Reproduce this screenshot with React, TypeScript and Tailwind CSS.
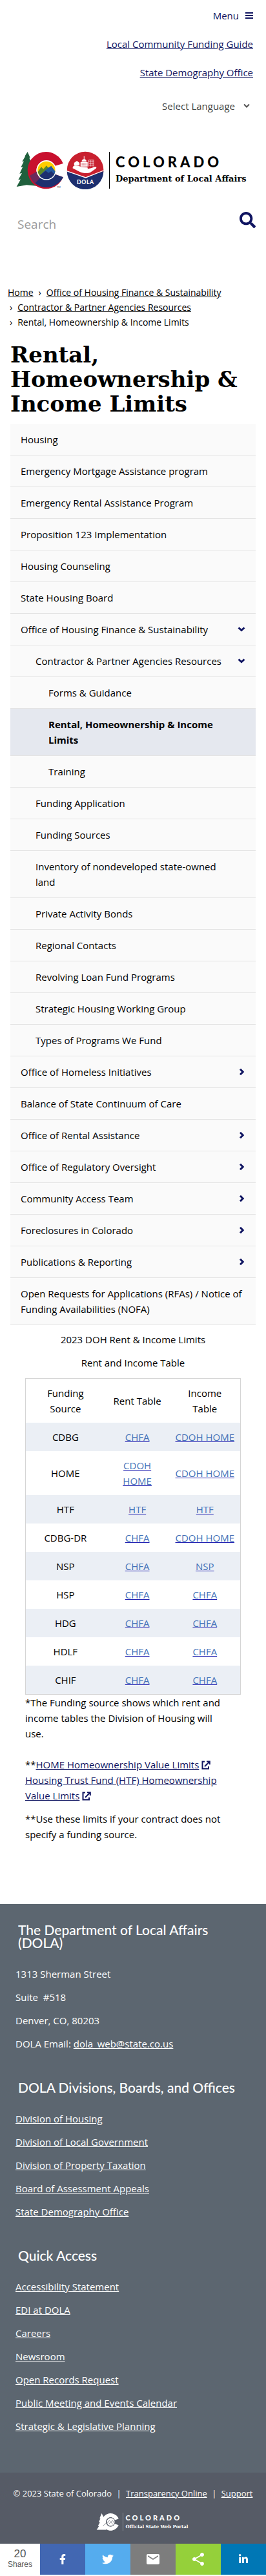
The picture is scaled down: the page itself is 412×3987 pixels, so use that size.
import React from "react";
import { FaSearch, FaFacebookF, FaTwitter, FaLinkedinIn } from "react-icons/fa";
import { MdEmail, MdShare } from "react-icons/md";

type NavItem = { label: string; level: 0 | 1 | 2; arrow?: "down" | "right"; current?: boolean };

const navItems: NavItem[] = [
  { label: "Housing", level: 0 },
  { label: "Emergency Mortgage Assistance program", level: 0 },
  { label: "Emergency Rental Assistance Program", level: 0 },
  { label: "Proposition 123 Implementation", level: 0 },
  { label: "Housing Counseling", level: 0 },
  { label: "State Housing Board", level: 0 },
  { label: "Office of Housing Finance & Sustainability", level: 0, arrow: "down" },
  { label: "Contractor & Partner Agencies Resources", level: 1, arrow: "down" },
  { label: "Forms & Guidance", level: 2 },
  { label: "Rental, Homeownership & Income Limits", level: 2, current: true },
  { label: "Training", level: 2 },
  { label: "Funding Application", level: 1 },
  { label: "Funding Sources", level: 1 },
  { label: "Inventory of nondeveloped state-owned land", level: 1 },
  { label: "Private Activity Bonds", level: 1 },
  { label: "Regional Contacts", level: 1 },
  { label: "Revolving Loan Fund Programs", level: 1 },
  { label: "Strategic Housing Working Group", level: 1 },
  { label: "Types of Programs We Fund", level: 1 },
  { label: "Office of Homeless Initiatives", level: 0, arrow: "right" },
  { label: "Balance of State Continuum of Care", level: 0 },
  { label: "Office of Rental Assistance", level: 0, arrow: "right" },
  { label: "Office of Regulatory Oversight", level: 0, arrow: "right" },
  { label: "Community Access Team", level: 0, arrow: "right" },
  { label: "Foreclosures in Colorado", level: 0, arrow: "right" },
  { label: "Publications & Reporting", level: 0, arrow: "right" },
  { label: "Open Requests for Applications (RFAs) / Notice of Funding Availabilities (NOFA)", level: 0 },
];

const levelPadding = {
  0: "pl-4 pr-3",
  1: "pl-[39px] pr-12",
  2: "pl-[59px] pr-12",
};

const tableRows = [
  ["CDBG", "CHFA", "CDOH HOME"],
  ["HOME", "CDOH HOME", "CDOH HOME"],
  ["HTF", "HTF", "HTF"],
  ["CDBG-DR", "CHFA", "CDOH HOME"],
  ["NSP", "CHFA", "NSP"],
  ["HSP", "CHFA", "CHFA"],
  ["HDG", "CHFA", "CHFA"],
  ["HDLF", "CHFA", "CHFA"],
  ["CHIF", "CHFA", "CHFA"],
];

const divisions = [
  "Division of Housing",
  "Division of Local Government",
  "Division of Property Taxation",
  "Board of Assessment Appeals",
  "State Demography Office",
];

const quickLinks = [
  "Accessibility Statement",
  "EDI at DOLA",
  "Careers",
  "Newsroom",
  "Open Records Request",
  "Public Meeting and Events Calendar",
  "Strategic & Legislative Planning",
];

function Emblems() {
  return (
    <svg viewBox="40 40 415 180" className="h-[60px] w-[138px] shrink-0" role="img" aria-label="Colorado and DOLA emblems">
      <path d="M96 46 L108 72 L104 74 L118 100 L112 102 L124 126 L136 150 L146 205 L92 200 L45 208 L64 174 L53 176 L70 145 L59 147 L74 116 L65 118 L79 90 L71 91 L86 66 L82 68 Z" fill="#20603d" />
      <path d="M262 100 A86 86 0 1 0 262 164 L224 150 A45 45 0 1 1 222 112 Z" fill="#c8102e" />
      <path d="M124 186 L150 160 A45 45 0 0 0 224 150 L262 164 A86 86 0 0 1 124 186 Z" fill="#1d2f6f" />
      <path d="M107 156 L142 136 A45 45 0 0 0 156 166 L130 193 A86 86 0 0 1 107 156 Z" fill="#6b2a5b" />
      <circle cx="184" cy="131" r="46" fill="#fff" />
      <circle cx="184" cy="131" r="41" fill="#ffcd00" />
      <path d="M144 140 L160 116 L170 126 L184 110 L196 124 L206 112 L224 138 A41 41 0 0 1 144 140 Z" fill="#5c8727" />
      <path d="M152 157 L178 132 L192 120 L206 112 L225 136 A41 41 0 0 1 152 157 Z" fill="#235a9f" />
      <path d="M152 157 L180 134 L194 144 L206 136 L221 149 A41 41 0 0 1 152 157 Z" fill="#1d2f6f" />
      <text x="233" y="215" fontSize="11" fontFamily="Lato, sans-serif" fill="#333">TM</text>
      <circle cx="365" cy="130" r="85" fill="#c8202f" />
      <path d="M280 136 L367 166 L450 136 A85 85 0 0 1 280 136 Z" fill="#1d2f6f" />
      <path d="M280 136 L367 166 L450 133" fill="none" stroke="#fff" strokeWidth="4" />
      <path d="M308 114 C320 106 334 112 346 116 L372 118 C380 119 378 125 371 126 L392 122 L409 116 C418 115 419 120 413 125 L388 142 C374 148 352 144 338 138 L306 122 Z" fill="#fff" />
      <path d="M313 97 L326 88 L338 97 V110 H313 Z M343 94 H376 V114 H343 Z M348 92 C348 76 371 76 371 92 Z M358 66 H361 V80 H358 Z" fill="#fff" />
      <path d="M350 98 V110 M356 98 V110 M362 98 V110 M368 98 V110" stroke="#c8202f" strokeWidth="2" />
      <path d="M381 84 H404 V114 M381 84 V114 M389 84 V114 M397 84 V114 M381 92 H404 M381 100 H404 M381 108 H404" stroke="#fff" strokeWidth="2" fill="none" />
      <text x="366" y="197" textAnchor="middle" fontSize="26" fontWeight="900" fontFamily="Lato, sans-serif" letterSpacing="2" fill="#fff">DOLA</text>
    </svg>
  );
}

function PortalMark() {
  return (
    <svg viewBox="0 0 110 84" className="h-7 w-[36px] shrink-0" role="img" aria-label="Colorado">
      <path d="M26 2 L38 26 L44 50 L46 80 L2 80 L14 62 L8 62 L18 44 L12 44 L20 26 L16 26 Z" fill="#fff" />
      <path d="M106 28 A41 41 0 1 0 106 58 L88 52 A22 22 0 1 1 88 34 Z" fill="#fff" />
      <circle cx="69" cy="43" r="20" fill="#fff" stroke="#565b66" strokeWidth="3" />
      <path d="M32 62 L50 46 M52 50 L62 36 L70 44 L77 36 L87 50 M60 52 L70 44 L80 56" fill="none" stroke="#565b66" strokeWidth="2" />
    </svg>
  );
}

function Chevron({ direction }: { direction: "down" | "right" }) {
  return (
    <svg viewBox="0 0 12 12" className="size-3" fill="none" stroke="#0f1461" strokeWidth="3" aria-hidden="true">
      <path d={direction === "down" ? "M1.5 3.5 L6 7.5 L10.5 3.5" : "M4 1.8 L8.2 6 L4 10.2"} />
    </svg>
  );
}

function ExternalIcon() {
  return (
    <svg viewBox="0 0 14 14" className="ml-1 inline size-[14px] align-[-2px]" fill="none" stroke="#0f1461" strokeWidth="2" aria-hidden="true">
      <path d="M5 1.5 H1.5 V12.5 H11 V9" />
      <path d="M5 9 L12.5 1.5 M8 1.2 H12.8 V6" />
    </svg>
  );
}

function FooterHeading({ children }: { children: React.ReactNode }) {
  return <h2 className="mb-[26px] pr-6 pl-1 font-['Lato',sans-serif] text-[21px] leading-5 font-medium">{children}</h2>;
}

function FooterLinks({ items }: { items: string[] }) {
  return (
    <ul className="flex flex-col gap-3">
      {items.map((item) => (
        <li key={item}>
          <a href="#" className="underline">{item}</a>
        </li>
      ))}
    </ul>
  );
}

export default function App() {
  return (
    <div className="min-h-screen bg-white font-['Open_Sans','Noto_Sans',sans-serif] text-[15px] leading-6 text-black">
      <header className="px-5 pt-3">
        <div className="flex flex-col items-end gap-5 text-[#0f1461]">
          <button type="button" className="flex items-center gap-[10px]">
            Menu
            <svg viewBox="0 0 12 12" className="size-3" fill="#0f1461" aria-hidden="true">
              <path d="M0 1h12v2H0zM0 5h12v2H0zM0 9h12v2H0z" />
            </svg>
          </button>
          <a href="#" className="underline">Local Community Funding Guide</a>
          <a href="#" className="underline">State Demography Office</a>
        </div>
        <div className="mt-7 flex items-center justify-end gap-3 pr-1 text-[#444]">
          <select aria-label="Select Language" className="appearance-none bg-transparent text-right">
            <option>Select Language</option>
          </select>
          <svg viewBox="0 0 12 8" className="h-2 w-3" fill="none" stroke="#555" strokeWidth="2" aria-hidden="true">
            <path d="M2 1.5 L6 5.5 L10 1.5" />
          </svg>
        </div>
        <a href="#" className="mt-[57px] flex items-center pl-1 text-black">
          <Emblems />
          <span className="ml-[7px] flex h-[57px] flex-col justify-center gap-1 border-l border-black pl-[9px]">
            <span className="font-['Lato',sans-serif] text-[22px] leading-6 font-black tracking-[5px]">COLORADO</span>
            <span className="font-['DejaVu_Serif',serif] text-[13px] leading-5 font-bold whitespace-nowrap">Department of Local Affairs</span>
          </span>
        </a>
        <form className="mt-8 flex items-start justify-between">
          <input type="search" aria-label="Search" placeholder="Search" className="h-11 min-w-0 flex-1 pl-[7px] text-[19px] placeholder:text-[#999]" />
          <button type="submit" aria-label="Submit search" className="-mr-1 pt-[3px]">
            <FaSearch className="size-[25px] text-[#0f1461]" />
          </button>
        </form>
      </header>

      <main className="pt-[72px]">
        <nav aria-label="Breadcrumb" className="px-3 text-[14px] leading-[23px]">
          <ol className="flex flex-wrap">
            <li><a href="#" className="underline">Home</a></li>
            <li><span className="px-2">›</span><a href="#" className="underline">Office of Housing Finance &amp; Sustainability</a></li>
            <li className="w-full"><span className="pr-2 pl-[3px]">›</span><a href="#" className="underline">Contractor &amp; Partner Agencies Resources</a></li>
            <li className="w-full"><span className="pr-2 pl-[3px]">›</span>Rental, Homeownership &amp; Income Limits</li>
          </ol>
        </nav>
        <h1 className="mt-5 px-4 font-['DejaVu_Serif',serif] text-[34px] leading-[38px] font-bold">Rental, Homeownership &amp; Income Limits</h1>

        <nav aria-label="Section" className="mx-4 mt-3 bg-[#fafafa]">
          <ul>
            {navItems.map((item) => (
              <li key={item.label} className={item.current ? "border-b border-[#e4e4e4] bg-[#e5e8ef] font-bold" : "border-b border-[#e4e4e4]"}>
                <div className="relative">
                  <a href="#" className={`block py-3 ${levelPadding[item.level]}`}>{item.label}</a>
                  {item.arrow && (
                    <button type="button" aria-label={`Toggle ${item.label}`} className="absolute inset-y-0 right-0 flex w-11 items-center justify-center">
                      <Chevron direction={item.arrow} />
                    </button>
                  )}
                </div>
              </li>
            ))}
          </ul>
        </nav>

        <div className="mt-[10px] flex flex-col gap-3 text-center">
          <p>2023 DOH Rent &amp; Income Limits</p>
          <p>Rent and Income Table</p>
        </div>

        <section className="mx-[39px] mt-3">
          <table className="w-full table-fixed border border-[#d5d5d5] text-center">
            <colgroup>
              <col className="w-[37%]" />
              <col className="w-[30%]" />
              <col className="w-[33%]" />
            </colgroup>
            <thead>
              <tr>
                <th scope="col" className="px-6 py-[10px] font-normal">Funding Source</th>
                <th scope="col" className="py-[10px] font-normal">Rent Table</th>
                <th scope="col" className="px-6 py-[10px] font-normal">Income Table</th>
              </tr>
            </thead>
            <tbody>
              {tableRows.map(([name, rent, income]) => (
                <tr key={name} className="odd:bg-[#ebeff5]">
                  <td className="py-[10px]">{name}</td>
                  <td className="px-6 py-[10px]"><a href="#" className="text-[#4472b8] underline decoration-[#1d1db0]">{rent}</a></td>
                  <td className="py-[10px]"><a href="#" className="text-[#4472b8] underline decoration-[#1d1db0]">{income}</a></td>
                </tr>
              ))}
            </tbody>
          </table>
          <p className="pr-6">*The Funding source shows which rent and income tables the Division of Housing will use.</p>
          <p className="mt-6">
            **<a href="#" className="text-[#0f1461] underline">HOME Homeownership Value Limits</a><ExternalIcon />
            <br />
            <a href="#" className="text-[#0f1461] underline">Housing Trust Fund (HTF) Homeownership Value Limits</a><ExternalIcon />
          </p>
          <p className="mt-3">**Use these limits if your contract does not specify a funding source.</p>
        </section>
      </main>

      <footer className="mt-24 text-white">
        <div className="flex flex-col gap-[46px] bg-[#5c6670] px-6 pt-[30px] pb-[60px]">
          <section>
            <FooterHeading>The Department of Local Affairs (DOLA)</FooterHeading>
            <div className="flex flex-col gap-3">
              <p>1313 Sherman Street</p>
              <p>Suite&nbsp; #518</p>
              <p>Denver, CO, 80203</p>
              <p>DOLA Email: <a href="#" className="underline">dola_web@state.co.us</a></p>
            </div>
          </section>
          <section>
            <FooterHeading>DOLA Divisions, Boards, and Offices</FooterHeading>
            <FooterLinks items={divisions} />
          </section>
          <section>
            <FooterHeading>Quick Access</FooterHeading>
            <FooterLinks items={quickLinks} />
          </section>
        </div>
        <div className="flex flex-col items-center gap-[18px] bg-[#565b66] py-5">
          <p className="text-[13px] whitespace-nowrap">
            © 2023 State of Colorado <span className="px-1">|</span> <a href="#" className="underline">Transparency Online</a> <span className="px-1">|</span> <a href="#" className="underline">Support</a>
          </p>
          <a href="#" className="flex items-center pl-7">
            <PortalMark />
            <span className="ml-[5px] flex h-7 flex-col justify-center border-l border-[#8a8f98] pl-1">
              <span className="font-['Lato',sans-serif] text-[11px] leading-4 font-black tracking-[3px]">COLORADO</span>
              <span className="font-['DejaVu_Serif',serif] text-[7px] leading-3 font-bold">Official State Web Portal</span>
            </span>
          </a>
        </div>
        <div className="flex h-12 font-['Liberation_Sans',sans-serif]">
          <div className="flex w-[62px] shrink-0 flex-col items-center justify-center bg-white text-[#555]">
            <span className="text-[17px] leading-4">20</span>
            <span className="text-[12px] leading-4">Shares</span>
          </div>
          <button type="button" aria-label="Share on Facebook" className="flex flex-1 items-center justify-center bg-[#4267b2]"><FaFacebookF className="size-4" /></button>
          <button type="button" aria-label="Share on Twitter" className="flex flex-1 items-center justify-center bg-[#55acee]"><FaTwitter className="size-[18px]" /></button>
          <button type="button" aria-label="Share by email" className="flex flex-1 items-center justify-center bg-[#7d7d7d]"><MdEmail className="size-6" /></button>
          <button type="button" aria-label="More sharing options" className="flex flex-1 items-center justify-center bg-[#95d03a]"><MdShare className="size-6" /></button>
          <button type="button" aria-label="Share on LinkedIn" className="flex flex-1 items-center justify-center bg-[#0077b5]"><FaLinkedinIn className="size-4" /></button>
        </div>
      </footer>
    </div>
  );
}
